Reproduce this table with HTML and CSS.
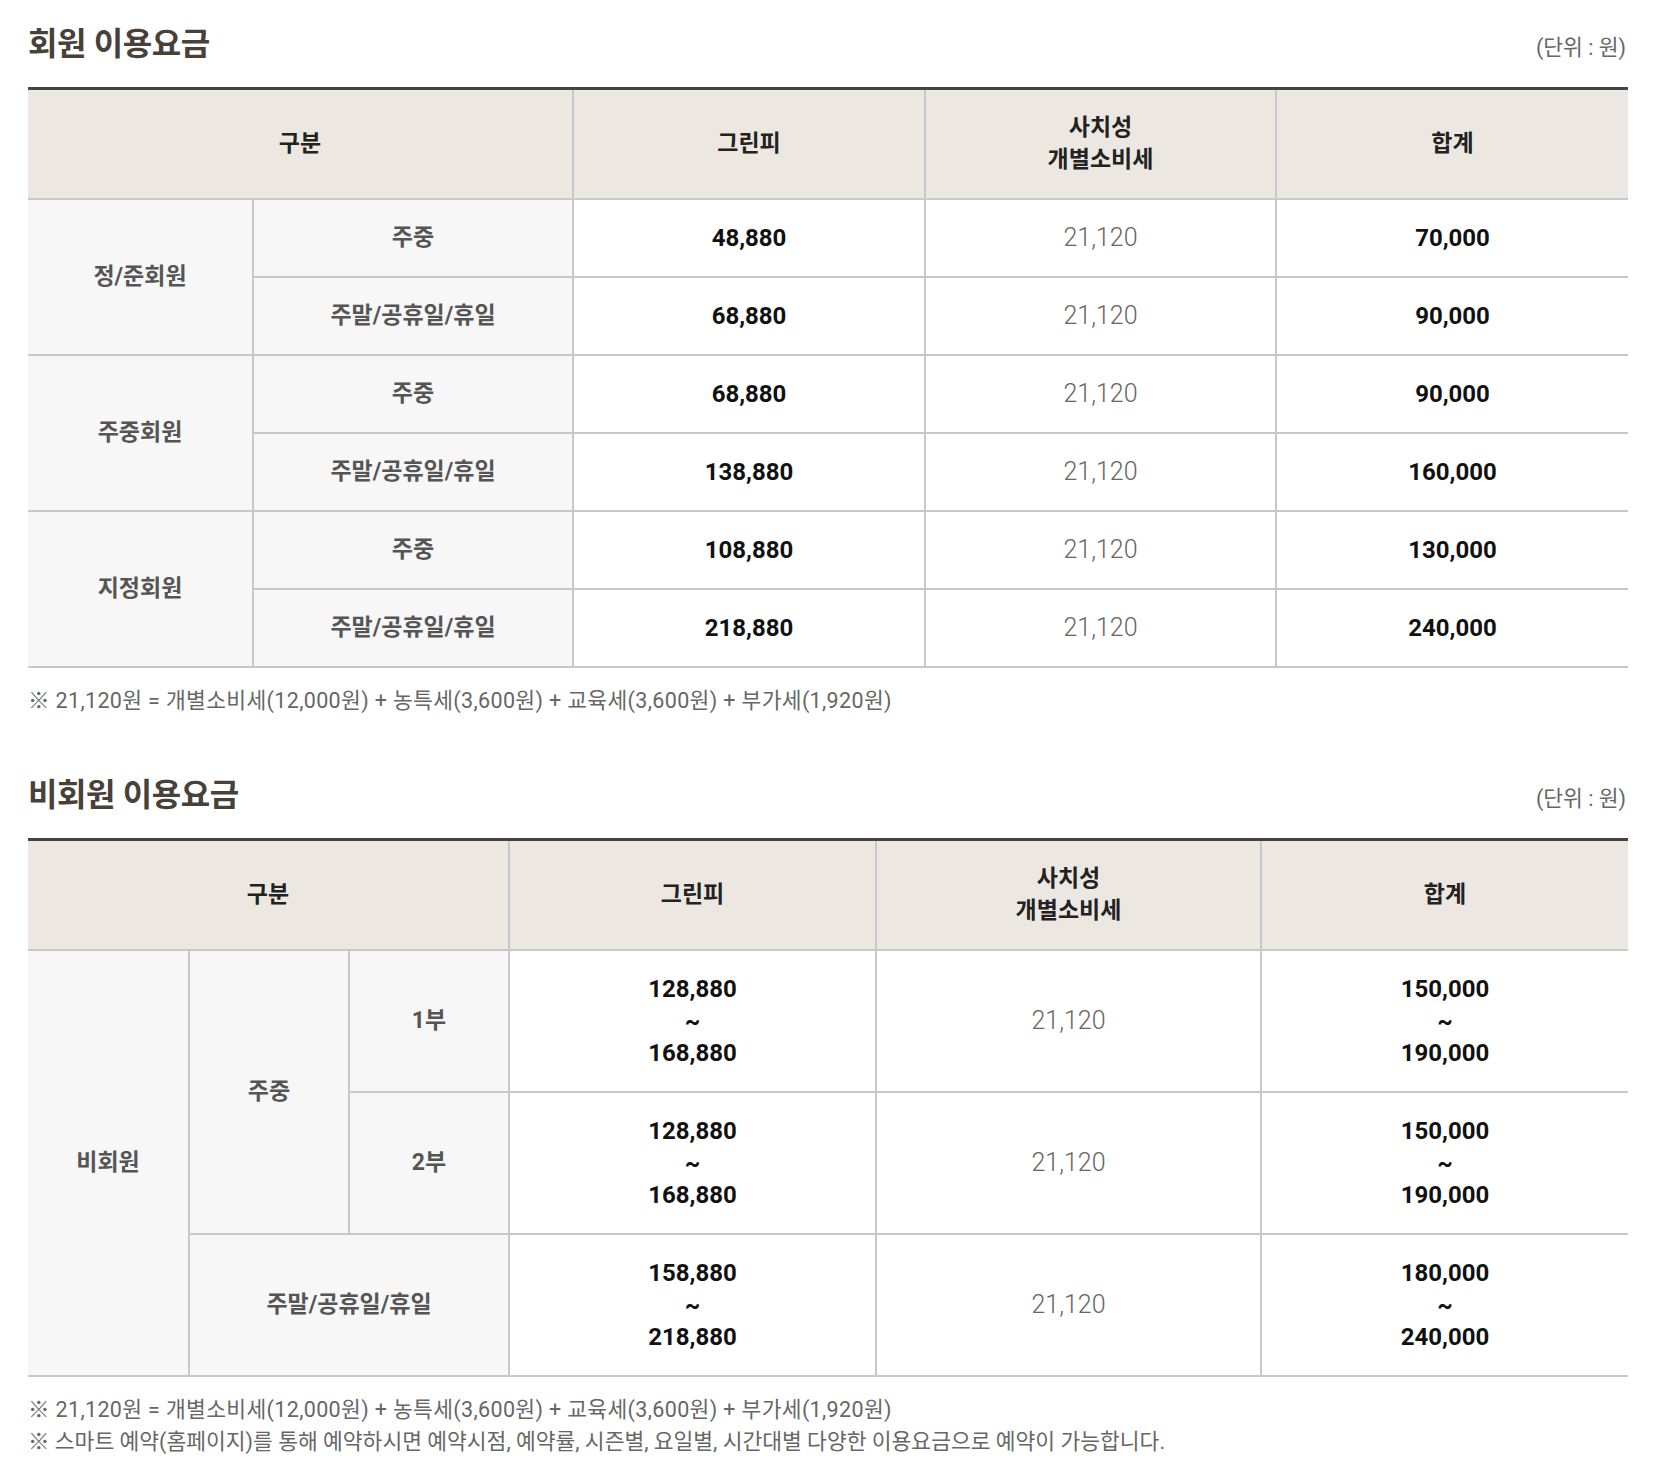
FILE: index.html
```html
<!DOCTYPE html>
<html lang="ko">
<head>
<meta charset="utf-8">
<title>이용요금</title>
<link rel="stylesheet" href="styles.css">
</head>
<body>
<div class="wrap">
  <section class="fee">
    <div class="fee-head">
      <h2 class="fee-title">회원 이용요금</h2>
      <span class="unit">(단위 : 원)</span>
    </div>
    <table class="fee-table t1">
      <colgroup>
        <col class="c1"><col class="c2"><col class="c3"><col class="c4"><col class="c5">
      </colgroup>
      <thead>
        <tr><th colspan="2">구분</th><th>그린피</th><th>사치성<br>개별소비세</th><th>합계</th></tr>
      </thead>
      <tbody>
        <tr><th rowspan="2" class="lab">정/준회원</th><th class="lab">주중</th><td class="num">48,880</td><td class="tax">21,120</td><td class="num">70,000</td></tr>
        <tr><th class="lab">주말/공휴일/휴일</th><td class="num">68,880</td><td class="tax">21,120</td><td class="num">90,000</td></tr>
        <tr><th rowspan="2" class="lab">주중회원</th><th class="lab">주중</th><td class="num">68,880</td><td class="tax">21,120</td><td class="num">90,000</td></tr>
        <tr><th class="lab">주말/공휴일/휴일</th><td class="num">138,880</td><td class="tax">21,120</td><td class="num">160,000</td></tr>
        <tr><th rowspan="2" class="lab">지정회원</th><th class="lab">주중</th><td class="num">108,880</td><td class="tax">21,120</td><td class="num">130,000</td></tr>
        <tr><th class="lab">주말/공휴일/휴일</th><td class="num">218,880</td><td class="tax">21,120</td><td class="num">240,000</td></tr>
      </tbody>
    </table>
    <ul class="notes">
      <li class="note-tax">※ 21,120원 = 개별소비세(12,000원) + 농특세(3,600원) + 교육세(3,600원) + 부가세(1,920원)</li>
    </ul>
  </section>

  <section class="fee fee-2">
    <div class="fee-head">
      <h2 class="fee-title">비회원 이용요금</h2>
      <span class="unit">(단위 : 원)</span>
    </div>
    <table class="fee-table t2">
      <colgroup>
        <col class="d1"><col class="d2"><col class="d3"><col class="d4"><col class="d5"><col class="d6">
      </colgroup>
      <thead>
        <tr><th colspan="3">구분</th><th>그린피</th><th>사치성<br>개별소비세</th><th>합계</th></tr>
      </thead>
      <tbody>
        <tr>
          <th rowspan="3" class="lab">비회원</th>
          <th rowspan="2" class="lab">주중</th>
          <th class="lab">1부</th>
          <td class="num">128,880<br>~<br>168,880</td>
          <td class="tax">21,120</td>
          <td class="num">150,000<br>~<br>190,000</td>
        </tr>
        <tr>
          <th class="lab">2부</th>
          <td class="num">128,880<br>~<br>168,880</td>
          <td class="tax">21,120</td>
          <td class="num">150,000<br>~<br>190,000</td>
        </tr>
        <tr>
          <th colspan="2" class="lab">주말/공휴일/휴일</th>
          <td class="num">158,880<br>~<br>218,880</td>
          <td class="tax">21,120</td>
          <td class="num">180,000<br>~<br>240,000</td>
        </tr>
      </tbody>
    </table>
    <ul class="notes">
      <li class="note-tax">※ 21,120원 = 개별소비세(12,000원) + 농특세(3,600원) + 교육세(3,600원) + 부가세(1,920원)</li>
      <li>※ 스마트 예약(홈페이지)를 통해 예약하시면 예약시점, 예약률, 시즌별, 요일별, 시간대별 다양한 이용요금으로 예약이 가능합니다.</li>
    </ul>
  </section>
</div>
</body>
</html>
```

FILE: styles.css
```css
* { box-sizing: border-box; }

html, body {
  margin: 0;
  padding: 0;
  background: #ffffff;
}

body {
  font-family: "Roboto", "Noto Sans CJK KR", sans-serif;
  color: #333;
}

.wrap {
  width: 1600px;
  margin-left: 28px;
  padding-top: 22px;
}

.fee-2 {
  margin-top: 56px;
}

.fee-head {
  display: flex;
  justify-content: space-between;
  align-items: baseline;
  height: 44px;
  margin-bottom: 21px;
}

.fee-title {
  margin: 0;
  font-size: 32px;
  line-height: 44px;
  font-weight: 700;
  color: #48413a;
  letter-spacing: -0.4px;
}

.unit {
  font-size: 21.5px;
  color: #666;
  margin-right: 2px;
}

.fee-table {
  width: 1600px;
  table-layout: fixed;
  border-collapse: collapse;
  border-top: 3px solid #444;
}

.t1 .c1 { width: 225px; }
.t1 .c2 { width: 320px; }
.t1 .c3 { width: 352px; }
.t1 .c4 { width: 351px; }
.t1 .c5 { width: 352px; }

.t2 .d1 { width: 161px; }
.t2 .d2 { width: 160px; }
.t2 .d3 { width: 160px; }
.t2 .d4 { width: 367px; }
.t2 .d5 { width: 385px; }
.t2 .d6 { width: 367px; }

.fee-table th,
.fee-table td {
  border: 2px solid #c8c8c8;
  border-left: none;
  padding: 22px 10px;
  line-height: 32px;
  text-align: center;
  vertical-align: middle;
}

.fee-table tr > :last-child {
  border-right: none;
}

.fee-table thead th {
  border-top: none;
  background: #ece8e1;
  color: #222;
  font-size: 23px;
  font-weight: 700;
}

.fee-table .lab {
  background: #f7f7f7;
  color: #555;
  font-size: 23px;
  font-weight: 700;
}

.fee-table .num {
  color: #111;
  font-size: 24px;
  font-weight: 700;
}

.fee-table .tax {
  color: #666;
  font-size: 25px;
  font-weight: 300;
}

.notes {
  list-style: none;
  margin: 17px 0 0;
  padding: 0;
}

.notes li {
  font-size: 21.5px;
  line-height: 32px;
  color: #666;
}

.notes .note-tax {
  letter-spacing: 0.35px;
}
```
